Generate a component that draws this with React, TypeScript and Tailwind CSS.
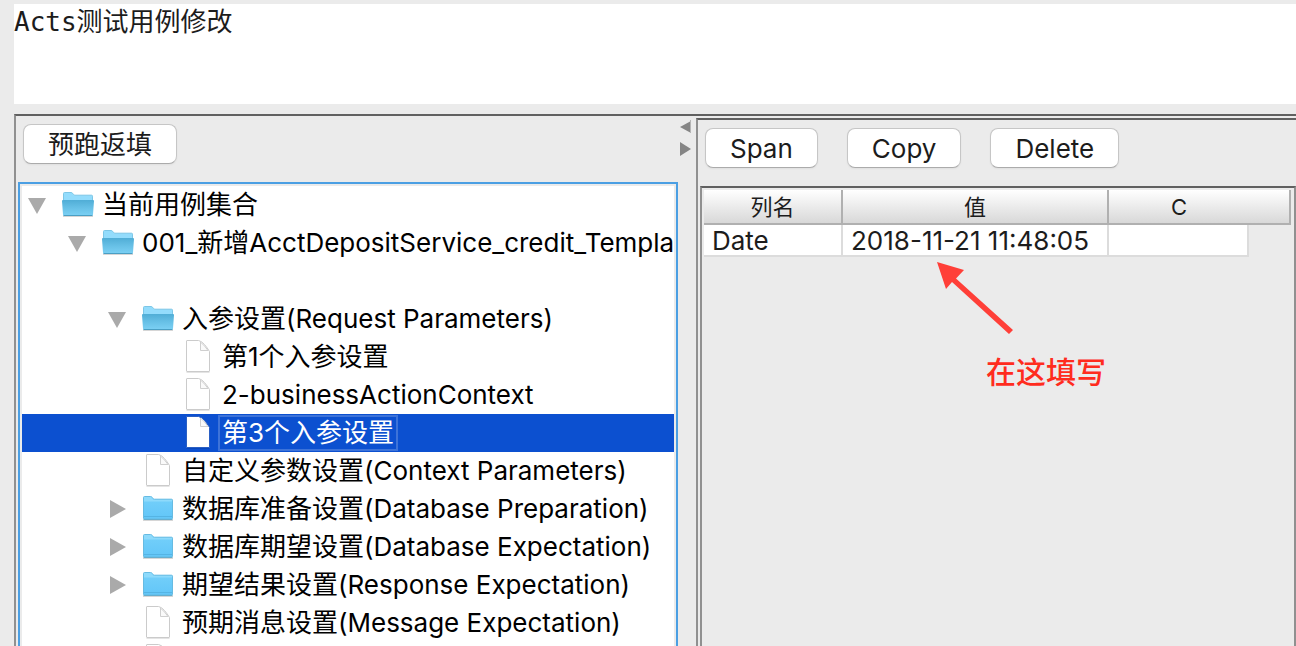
import { useState } from "react";
import clsx from "clsx";

type Node = {
  id: string;
  label: string;
  depth: number;
  icon: "open" | "folder" | "file" | "none";
};

const nodes: Node[] = [
  { id: "root", label: "当前用例集合", depth: 0, icon: "open" },
  { id: "case", label: "001_新增AcctDepositService_credit_Template", depth: 1, icon: "open" },
  { id: "blank", label: "", depth: 2, icon: "none" },
  { id: "request", label: "入参设置(Request Parameters)", depth: 2, icon: "open" },
  { id: "arg1", label: "第1个入参设置", depth: 3, icon: "file" },
  { id: "arg2", label: "2-businessActionContext", depth: 3, icon: "file" },
  { id: "arg3", label: "第3个入参设置", depth: 3, icon: "file" },
  { id: "context", label: "自定义参数设置(Context Parameters)", depth: 2, icon: "file" },
  { id: "prepare", label: "数据库准备设置(Database Preparation)", depth: 2, icon: "folder" },
  { id: "expect", label: "数据库期望设置(Database Expectation)", depth: 2, icon: "folder" },
  { id: "response", label: "期望结果设置(Response Expectation)", depth: 2, icon: "folder" },
  { id: "message", label: "预期消息设置(Message Expectation)", depth: 2, icon: "file" },
  { id: "more", label: "", depth: 2, icon: "file" },
];

function Triangle({ open }: { open: boolean }) {
  return (
    <svg width="18" height="18" viewBox="0 0 18 18" fill="#aaaaaa" aria-hidden="true">
      {open ? <path d="M0 2h18L9 18z" /> : <path d="M2 0v18l16-9z" />}
    </svg>
  );
}

function FolderIcon({ open }: { open: boolean }) {
  return (
    <svg width="32" height="26" viewBox="0 1 32 26" aria-hidden="true">
      <defs>
        <linearGradient id="openFront" x1="0" y1="0" x2="0" y2="1">
          <stop offset="0" stopColor="#50add6" />
          <stop offset="0.5" stopColor="#67c0e6" />
          <stop offset="1" stopColor="#7bd0f4" />
        </linearGradient>
        <linearGradient id="closedFront" x1="0" y1="0" x2="0" y2="1">
          <stop offset="0" stopColor="#75d0fa" />
          <stop offset="1" stopColor="#62c6f8" />
        </linearGradient>
      </defs>
      <path d="M1 24.5h30v1.5H1z" fill="#000" opacity="0.16" />
      {open ? (
        <>
          <path
            d="M1.5 10V2.5Q1.5 1.5 2.5 1.5H9q1 0 1.6.8l1.2 1.4q.4.5 1.2.5h16.5q1 0 1 1V10z"
            fill="#93dcfc"
            stroke="#7cc6e6"
          />
          <path
            d="M0 10q0-1 1-1h30q1 0 1 1L31 23.5q0 1-1 1H2q-1 0-1-1z"
            fill="url(#openFront)"
          />
          <path d="M1.5 24.5h29" stroke="#4a9fc4" />
        </>
      ) : (
        <>
          <path
            d="M1.5 23V2.5Q1.5 1.5 2.5 1.5H8.5q1 0 1.6.8l1.2 1.4q.4.5 1.2.5h17q1 0 1 1V23q0 1-1 1H2.5q-1 0-1-1z"
            fill="url(#closedFront)"
            stroke="#66bbe2"
          />
          <path d="M2 2h7l2.5 3H30v1.5H2z" fill="#8edafb" />
          <path d="M2 21.5h28" stroke="#55b4e4" />
          <path d="M1.5 24.5h29" stroke="#4a9fc4" opacity="0.7" />
        </>
      )}
    </svg>
  );
}

function FileIcon({ selected }: { selected: boolean }) {
  return (
    <svg width="26" height="34" viewBox="0 0 26 34" aria-hidden="true">
      <path d="M1.5 32.5h23" stroke="#000" opacity="0.1" />
      <path
        d="M2 .5h11.5q3 .5 6 4t5 7V31q0 .5-.5.5H2q-.5 0-.5-.5V1q0-.5.5-.5z"
        fill="#fff"
        stroke={selected ? "#2a5fc4" : "#cbcbcb"}
      />
      <path d="M15.5 2v8.5H23q-3-4.5-7.5-8.5z" fill="#fafafa" stroke="#cfcfcf" />
    </svg>
  );
}

function ToolButton({ children }: { children: string }) {
  return (
    <button className="h-10 rounded-lg border border-[#c6c6c6] border-b-[#ababab] bg-white px-6 pt-0.5 text-[26px] leading-8 shadow-xs">
      {children}
    </button>
  );
}

function TreeRow({
  node,
  selected,
  onSelect,
}: {
  node: Node;
  selected: boolean;
  onSelect: () => void;
}) {
  const isFolder = node.icon === "open" || node.icon === "folder";

  return (
    <li
      role="treeitem"
      aria-selected={selected}
      onClick={onSelect}
      className={clsx(
        "flex h-[38px] shrink-0 items-center pl-1.5 whitespace-nowrap",
        selected ? "bg-[#0c50d0] text-white" : "text-black"
      )}
    >
      <span className="shrink-0" style={{ width: node.depth * 40 }} />
      <span className="mr-4 w-[18px] shrink-0">
        {isFolder && <Triangle open={node.icon === "open"} />}
      </span>
      <span className="mr-1 flex w-8 shrink-0 justify-center">
        {isFolder && <FolderIcon open={node.icon === "open"} />}
        {node.icon === "file" && <FileIcon selected={selected} />}
      </span>
      <span
        className={clsx(
          "border-2 px-0.5 leading-8",
          selected ? "border-[#3d73d9]" : "border-transparent"
        )}
      >
        {node.label}
      </span>
    </li>
  );
}

export default function App() {
  const [selected, setSelected] = useState("arg3");

  return (
    <div className="flex h-screen flex-col overflow-hidden bg-[#ebebeb] pt-1 pl-3.5 font-['Inter','Noto_Sans_CJK_SC',sans-serif] text-[26px] text-[#1c1c1c]">
      <textarea
        aria-label="描述"
        defaultValue="Acts测试用例修改"
        className="mb-2.5 h-[100px] w-full shrink-0 resize-none bg-white font-['DejaVu_Sans_Mono','Noto_Sans_CJK_SC',monospace] text-[26px] leading-9 outline-none"
      />

      <div className="flex min-h-0 flex-1 border-t-2 border-l-2 border-t-[#606060] border-l-[#909090]">
        <section className="flex w-[662px] shrink-0 flex-col pt-2 pl-0.5">
          <div className="mb-[18px] pl-[5px]">
            <ToolButton>预跑返填</ToolButton>
          </div>
          <div className="flex min-h-0 flex-1 border-2 border-b-0 border-[#4b9fe3] px-0.5 pt-0.5">
            <ul
              role="tree"
              className="flex min-w-0 flex-1 flex-col overflow-hidden bg-white"
            >
              {nodes.map((node) => (
                <TreeRow
                  key={node.id}
                  node={node}
                  selected={node.id === selected}
                  onSelect={() => setSelected(node.id)}
                />
              ))}
            </ul>
          </div>
        </section>

        <div className="flex w-[18px] shrink-0 flex-col items-start gap-2 pt-1 pl-0.5">
          <button aria-label="收起左侧">
            <svg width="12" height="14" viewBox="0 0 12 14">
              <path d="M11 1v12L0 7z" fill="#858585" />
              <path d="M10.5 0v13" stroke="#b5b5b5" />
            </svg>
          </button>
          <button aria-label="展开左侧">
            <svg width="12" height="14" viewBox="0 0 12 14">
              <path d="M0 0v14l11-7z" fill="#858585" />
            </svg>
          </button>
        </div>

        <section className="mt-0.5 flex min-w-0 flex-1 flex-col border-t-2 border-l-2 border-t-[#606060] border-l-[#909090] pt-2 pl-0.5">
          <div className="mb-[18px] flex gap-[29px] pl-[5px]">
            <ToolButton>Span</ToolButton>
            <ToolButton>Copy</ToolButton>
            <ToolButton>Delete</ToolButton>
          </div>

          <div className="relative min-h-0 flex-1 border-x-2 border-t-2 border-x-[#909090] border-t-[#606060] pt-0.5 pr-[3px] pl-0.5">
            <table className="w-full table-fixed border-separate border-spacing-0">
              <thead>
                <tr className="h-[35px] bg-linear-to-b from-white to-[#d6d6d6] text-[22px] leading-7 *:border-b-2 *:border-[#b0b0b0] *:p-0 *:font-normal">
                  <th className="w-[139px] border-r-2">列名</th>
                  <th className="w-[266px] border-r-2">值</th>
                  <th className="w-[140px]">C</th>
                  <td className="border-r-2" />
                </tr>
              </thead>
              <tbody>
                <tr className="h-8 leading-7 whitespace-nowrap">
                  <td className="border-r-2 border-b-2 border-[#dcdcdc] bg-white p-0 pt-0.5 pl-2">
                    Date
                  </td>
                  <td className="border-r-2 border-b-2 border-[#dcdcdc] bg-white p-0 pt-0.5 pl-2">
                    2018-11-21 11:48:05
                  </td>
                  <td className="border-r-2 border-b-2 border-[#dcdcdc] bg-white p-0" />
                  <td className="p-0" />
                </tr>
              </tbody>
            </table>

            <div className="absolute top-[74px] left-[234px] text-[30px] leading-10 font-medium text-[#ff2c1e]">
              <svg width="80" height="74" viewBox="0 0 80 74" aria-hidden="true">
                <path d="M1 0L28 8L20 16.5L77 68L73 72L16 20L10 27z" fill="#ff3f38" />
              </svg>
              <p className="mt-4 pl-[50px] whitespace-nowrap">在这填写</p>
            </div>
          </div>
        </section>
      </div>
    </div>
  );
}
